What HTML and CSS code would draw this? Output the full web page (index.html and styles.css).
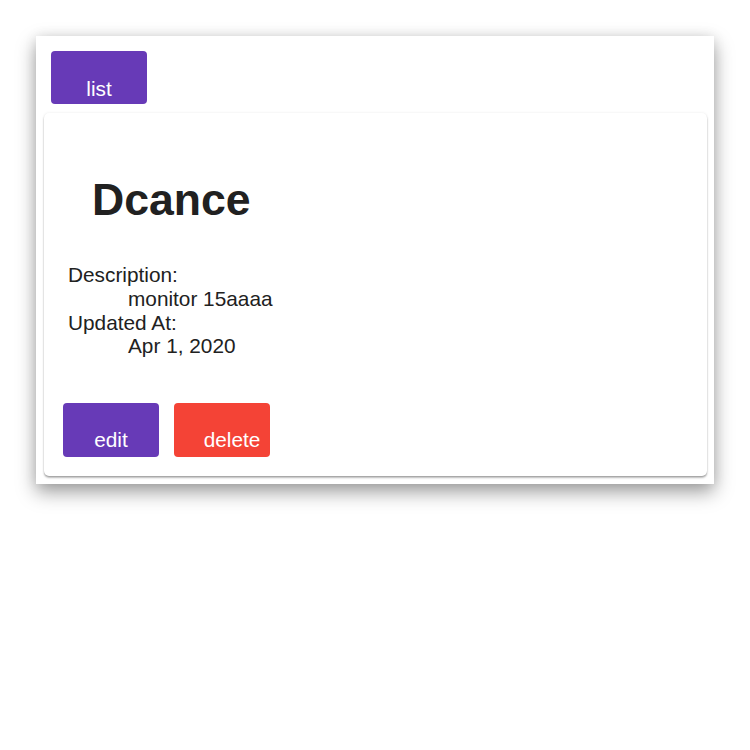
FILE: index.html
```html
<!DOCTYPE html>
<html>
<head>
<meta charset="utf-8">
<link rel="stylesheet" href="styles.css">
</head>
<body>
<div class="panel">
  <button class="btn btn-primary btn-list">list</button>
  <div class="card">
    <h1 class="title">Dcance</h1>
    <dl class="details">
      <dt>Description:</dt>
      <dd>monitor 15aaaa</dd>
      <dt>Updated At:</dt>
      <dd>Apr 1, 2020</dd>
    </dl>
    <div class="actions">
      <button class="btn btn-primary">edit</button>
      <button class="btn btn-danger">delete</button>
    </div>
  </div>
</div>
</body>
</html>
```
FILE: styles.css
```css
html, body {
  margin: 0;
  padding: 0;
  background: #ffffff;
}
body {
  padding: 36px;
  font-family: "Liberation Sans", Arial, sans-serif;
  color: #212121;
}
.panel {
  width: 678px;
  box-sizing: border-box;
  padding: 15px 7px 8px 8px;
  background: #ffffff;
  box-shadow: 0 8px 18px rgba(0,0,0,0.38), 0 0 12px rgba(0,0,0,0.08);
}
.btn {
  display: flex;
  align-items: flex-end;
  justify-content: center;
  box-sizing: border-box;
  width: 96px;
  height: 54px;
  border: none;
  border-radius: 4px;
  color: #ffffff;
  font-family: "Liberation Sans", Arial, sans-serif;
  font-size: 20.8px;
  line-height: 24px;
  padding: 0 0 5px 0;
  cursor: pointer;
}
.btn-primary {
  background: #673ab7;
}
.btn-danger {
  background: #f44336;
  padding-left: 20px;
}
.btn-list {
  height: 53px;
  margin-left: 7px;
  margin-bottom: 9px;
  padding-bottom: 3px;
}
.card {
  background: #ffffff;
  border-radius: 5px;
  box-shadow: 0 2px 2px rgba(0,0,0,0.25), 0 0 3px rgba(0,0,0,0.08), 0 1px 1px rgba(0,0,0,0.12);
  padding: 24px 0 19px 0;
}
.title {
  margin: 38px 0 0 48px;
  font-size: 44.6px;
  font-weight: bold;
  line-height: 50px;
}
.details {
  margin: 38px 0 0 24px;
  font-size: 20.8px;
  line-height: 23.8px;
}
.details dt {
  margin: 0;
}
.details dd {
  margin: 0 0 0 60px;
}
.actions {
  display: flex;
  gap: 15px;
  margin: 45px 0 0 19px;
}
```
